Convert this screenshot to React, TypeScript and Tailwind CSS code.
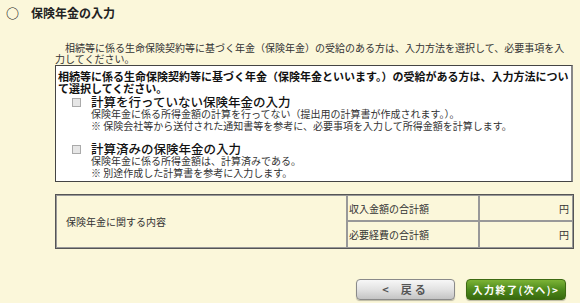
export default function App() {
  return (
    <div className="w-[580px] h-[303px] overflow-hidden bg-[#fbf7da] text-[#222] font-['Noto_Sans_CJK_JP',sans-serif]">
      {/* Title */}
      <div className="flex items-center gap-[12px] pl-[6px] pt-[4px] text-[12px] font-bold leading-[18px]">
        <span className="text-[13px] font-bold">○</span>
        <span>保険年金の入力</span>
      </div>

      {/* Lead text */}
      <p className="ml-[55px] mt-[20px] w-[515px] text-[10px] leading-[11px] indent-[10px] text-[#333]">
        相続等に係る生命保険契約等に基づく年金（保険年金）の受給のある方は、入力方法を選択して、必要事項を入力してください。
      </p>

      {/* Choice box */}
      <div className="ml-[55px] mt-[1px] h-[117px] w-[518px] overflow-hidden border border-r-2 border-[#444] border-r-[#888] bg-white pl-[2px] pt-[4px]">
        <p className="text-[11px] font-bold leading-[12px] text-[#111]">
          相続等に係る生命保険契約等に基づく年金（保険年金といいます。）の受給がある方は、入力方法について選択してください。
        </p>

        <div className="mt-[1px] flex flex-col gap-[10px]">
          <div className="flex pl-[14px]">
            <span className="mt-[3px] h-[9px] w-[9px] shrink-0 border border-[#aaa] bg-[#e6e6e6]" />
            <div className="ml-[10px]">
              <div className="text-[12.5px] font-medium leading-[13px] text-[#111]">計算を行っていない保険年金の入力</div>
              <div className="text-[10px] leading-[12px] text-[#333]">保険年金に係る所得金額の計算を行ってない（提出用の計算書が作成されます。）。</div>
              <div className="text-[10px] leading-[12px] text-[#333]">※ 保険会社等から送付された通知書等を参考に、必要事項を入力して所得金額を計算します。</div>
            </div>
          </div>

          <div className="flex pl-[14px]">
            <span className="mt-[3px] h-[9px] w-[9px] shrink-0 border border-[#aaa] bg-[#e6e6e6]" />
            <div className="ml-[10px]">
              <div className="text-[12.5px] font-medium leading-[13px] text-[#111]">計算済みの保険年金の入力</div>
              <div className="text-[10px] leading-[12px] text-[#333]">保険年金に係る所得金額は、計算済みである。</div>
              <div className="text-[10px] leading-[12px] text-[#333]">※ 別途作成した計算書を参考に入力します。</div>
            </div>
          </div>
        </div>
      </div>

      {/* Summary table */}
      <div className="ml-[55px] mt-[12px] grid w-[519px] grid-cols-[291px_132px_1fr] grid-rows-[26px_27px] border border-[#555] text-[10px] text-[#333]">
        <div className="row-span-2 flex items-center border border-[#999] pl-[9px]">保険年金に関する内容</div>
        <div className="flex items-center border border-[#999] pl-[1px]">収入金額の合計額</div>
        <div className="flex items-center justify-end border border-[#999] pr-[3px]">円</div>
        <div className="flex items-center border border-[#999] pl-[1px]">必要経費の合計額</div>
        <div className="flex items-center justify-end border border-[#999] pr-[3px]">円</div>
      </div>

      {/* Buttons */}
      <div className="mt-[30px] flex justify-end gap-[11px] pr-[14px]">
        <button className="flex h-[21px] w-[99px] items-center justify-center gap-[12px] rounded-[4px] border border-[#8a8a8a] bg-gradient-to-b from-[#f7f7f7] via-[#e2e2e2] to-[#c4c4c4] text-[11px] font-bold text-[#555] shadow-[0_1px_1px_rgba(0,0,0,0.25)]">
          <span>&lt;</span>
          <span className="tracking-[3px]">戻る</span>
        </button>
        <button className="flex h-[21px] w-[100px] items-center justify-center rounded-[4px] border border-[#3d6a12] bg-gradient-to-b from-[#7cb336] via-[#4e8a1c] to-[#386a0e] text-[10px] font-bold tracking-[1.5px] text-white shadow-[0_1px_1px_rgba(0,0,0,0.25)]">
          入力終了(次へ)&gt;
        </button>
      </div>
    </div>
  );
}
